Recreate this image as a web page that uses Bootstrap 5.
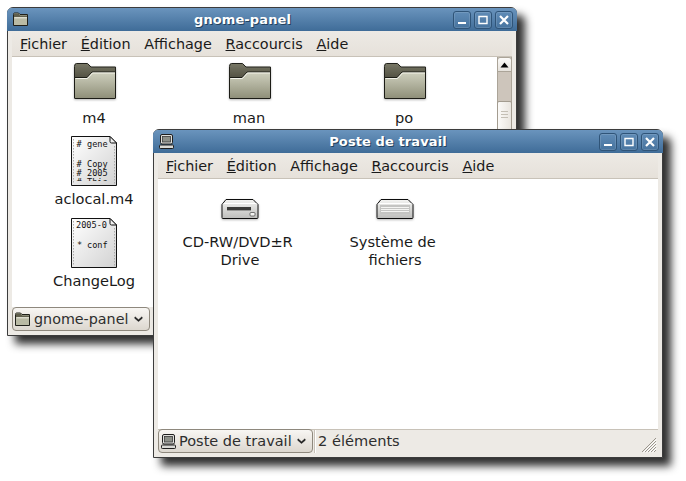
<!DOCTYPE html>
<html lang="fr">
<head>
<meta charset="utf-8">
<title>Poste de travail</title>
<link href="https://cdn.jsdelivr.net/npm/bootstrap@5.3.0/dist/css/bootstrap.min.css" rel="stylesheet">
<style>
html,body{margin:0;background:#fff;width:686px;height:481px;overflow:hidden}
body{font-family:"DejaVu Sans",sans-serif;font-size:14.6px;line-height:18px;color:#1a1a1a}
.gwin{width:510px;height:329px;background:#edeae5;border:1px solid #3c3c3c;border-radius:6px 6px 0 0;box-shadow:8px 8px 9px rgba(0,0,0,.82)}
.gwin-a{left:7px;top:7px}
.gwin-b{left:153px;top:129px}
.gtitle{height:23px;flex:none;margin:0 -1px;padding:0 4px 0 6px;background:linear-gradient(#6a94bd,#3f6c98);border-radius:5px 5px 0 0;color:#fff;font-weight:700;font-size:13px;text-shadow:1px 1px 0 #23425f}
.gtitle-icon{margin-right:6px;flex:none}
.gtitle-text{flex:1;text-align:center;letter-spacing:.1px}
.gbtn{width:18px;height:18px;margin-left:3px;border:1px solid #2f5478;border-radius:3px;background:linear-gradient(#5f8bb6,#47749f);box-shadow:inset 0 0 0 1px rgba(255,255,255,.12)}
.gmenu{height:26px;flex:none;margin:0 4px;padding:1px 0 0 8px;gap:13.7px;font-size:14.4px;background:linear-gradient(#edeae5,#e6e1da);border-bottom:1px solid #c8c2b8}
.gbody{flex:1;min-height:0;margin:0 4px;background:#fff;overflow:hidden}
.gicons{flex:1;padding-left:4.5px;display:grid;grid-template-columns:repeat(3,155px);grid-template-rows:76px 82px 83px;align-content:start}
.gicons-b{grid-template-rows:auto}
.gcell{display:flex;flex-direction:column;align-items:center;text-align:center}
.gcell svg{display:block;flex:none}
.glabel{width:130px}
.gscroll{width:15px;flex:none;background:#cdc5bb;border-left:1px solid #aba498;border-right:1px solid #aba498}
.gstep{height:15px;margin:0 -1px;border:1px solid #aba498;border-radius:3px 3px 0 0;background:linear-gradient(#fbfaf8,#e6e2dc)}
.gthumb{margin:29px -1px 0;height:70px;border:1px solid #a39c90;border-radius:2px;background:linear-gradient(90deg,#fbfaf8,#e9e5df)}
.gstatus{height:28px;flex:none;margin:0 4px;color:#2e2e2e}
.gstatus-b{border-top:1px solid #c8c2b8}
.gcombo{height:24px;border:1px solid #8e887d;border-radius:4px;background:linear-gradient(#f8f6f3,#dcd7cf);padding:0 6px 0 2px;gap:3px;white-space:nowrap;font-size:14.3px}
.gcombo-a{width:138px}
.gcombo-b{width:155px;margin-top:-1px;font-size:14.5px}
.gsep{width:2px;height:23px;border-left:1px solid #c8c2b8;border-right:1px solid #fff;margin:0 2px 0 1px}
.gcount{margin-top:2px}
.ggrip{width:17px;height:17px;margin-right:1px;align-self:flex-end;margin-bottom:4px}
</style>
</head>
<body>
<svg width="0" height="0" class="position-absolute">
<defs>
<linearGradient id="fb" x1="0" y1="0" x2="0" y2="1"><stop offset="0" stop-color="#787766"/><stop offset="1" stop-color="#4f4e3f"/></linearGradient>
<linearGradient id="ff" x1="0" y1="0" x2="0" y2="1"><stop offset="0" stop-color="#d0d1bf"/><stop offset="1" stop-color="#8e8e78"/></linearGradient>
<linearGradient id="dc" x1="0" y1="0" x2="1" y2="1"><stop offset="0" stop-color="#fff"/><stop offset="1" stop-color="#d2d2d2"/></linearGradient>
<linearGradient id="dv" x1="0" y1="0" x2="0" y2="1"><stop offset="0" stop-color="#f4f4f2"/><stop offset="1" stop-color="#bdbdbb"/></linearGradient>
<filter id="sf" x="-20%" y="-20%" width="140%" height="140%"><feDropShadow dx="0" dy="1" stdDeviation="1" flood-color="#000" flood-opacity=".28"/></filter>
<clipPath id="dclip"><rect x="3" y="2" width="41" height="43"/></clipPath>
<symbol id="folder" viewBox="0 0 48 52">
<g filter="url(#sf)">
<path d="M4.500 9.500q0-3 2-3h11l3.500 3.500h24.500v12h-41z" fill="url(#fb)" stroke="#22221c"/>
<path d="M4.500 20.500h12.500l5-5.500h23.500v26q0 .5-.5.5h-40q-.5 0-.5-.5z" fill="url(#ff)" stroke="#1d1d18"/>
<path d="M5.500 21.500h12l5-5.500h22.500" fill="none" stroke="#f3f3ea"/>
</g>
</symbol>
<symbol id="drive" viewBox="0 0 48 54">
<g filter="url(#sf)">
<path d="M6.500 39.500q-.5 0-.5-1v-13l4-5h27l5 5v13q0 1-1 1z" fill="url(#dv)" stroke="#111"/>
<path d="M7.500 24.500h33" stroke="#fff" fill="none"/>
</g>
</symbol>
<symbol id="smallfolder" viewBox="0 0 16 15">
<path d="M.5 2.500q0-1.500 1-1.500h4l1.500 1.500h7.500v11h-14z" fill="#b9baa4" stroke="#20201a"/>
<path d="M1 2h5l1 1.500h7v1.500h-13z" fill="#5f5e4c"/>
<path d="M1.500 5.800h12.500" stroke="#ecece0"/>
</symbol>
<symbol id="smallpc" viewBox="0 0 15 15">
<rect x="1.500" y=".5" width="12" height="9.500" rx="1.500" fill="#e0e0dc" stroke="#1e1e1e"/>
<rect x="3.500" y="2.500" width="8" height="5.500" fill="#8d9089" stroke="#3a3a3a" stroke-width=".8"/>
<rect x=".5" y="11" width="14" height="3.500" rx=".8" fill="#dadad6" stroke="#1e1e1e"/>
</symbol>
<symbol id="chev" viewBox="0 0 10 7">
<path d="M1 1l4 3.500L9 1l.5 1.500L5 6.500 .5 2.500z" fill="#1e1e1e" stroke="#1e1e1e" stroke-width=".6"/>
</symbol>
</defs>
</svg>

<section class="gwin gwin-a position-absolute d-flex flex-column">
<header class="gtitle d-flex align-items-center">
<svg width="16" height="15" class="gtitle-icon"><use href="#smallfolder"/></svg>
<div class="gtitle-text">gnome-panel</div>
<div class="gbtn d-flex align-items-center justify-content-center"><svg width="10" height="10"><rect x="1" y="7" width="8" height="2" fill="#fff"/></svg></div>
<div class="gbtn d-flex align-items-center justify-content-center"><svg width="10" height="10"><path d="M1 1.500h8v7h-8z" fill="none" stroke="#fff" stroke-width="1.400"/></svg></div>
<div class="gbtn d-flex align-items-center justify-content-center"><svg width="10" height="10"><path d="M1 1l8 8M9 1l-8 8" stroke="#fff" stroke-width="2.200"/></svg></div>
</header>
<nav class="gmenu d-flex align-items-center">
<span><u>F</u>ichier</span><span><u>É</u>dition</span><span>Afficha<u>g</u>e</span><span><u>R</u>accourcis</span><span><u>A</u>ide</span>
</nav>
<main class="gbody d-flex">
<div class="gicons">
<div class="gcell"><svg width="48" height="52"><use href="#folder"/></svg><div class="glabel">m4</div></div>
<div class="gcell"><svg width="48" height="52"><use href="#folder"/></svg><div class="glabel">man</div></div>
<div class="gcell"><svg width="48" height="52"><use href="#folder"/></svg><div class="glabel">po</div></div>
<div class="gcell">
<svg width="48" height="57" viewBox="0 0 48 57">
<path d="M1.500 3.500h38.500l6.500 6.500v42.500h-45z" fill="url(#dc)" stroke="#111"/>
<path d="M3.500 6v44.500M44.500 13v37.500" stroke="#aaa" stroke-dasharray="1.500 1.500" fill="none"/>
<g font-family="'DejaVu Sans Mono',monospace" font-size="8.600" fill="#111" clip-path="url(#dclip)" transform="translate(0 3)">
<text x="6.500" y="10.500">#</text><text x="17" y="10.500">gene</text>
<text x="6.500" y="31">#</text><text x="17" y="31">Copy</text>
<text x="6.500" y="40">#</text><text x="17" y="40">2005</text>
<text x="6.500" y="49">#</text><text x="17" y="49">This</text>
</g>
<path d="M40 3.500v5q0 1.500 1.500 1.500h5z" fill="#eee" stroke="#111"/>
</svg>
<div class="glabel">aclocal.m4</div></div>
<div class="gcell"></div><div class="gcell"></div>
<div class="gcell">
<svg width="48" height="57" viewBox="0 0 48 57">
<path d="M1.500 3.500h38.500l6.500 6.500v42.500h-45z" fill="url(#dc)" stroke="#111"/>
<path d="M3.500 6v44.500M44.500 13v37.500" stroke="#aaa" stroke-dasharray="1.500 1.500" fill="none"/>
<g font-family="'DejaVu Sans Mono',monospace" font-size="8.600" fill="#111">
<text x="6" y="12.500" textLength="31">2005-0</text>
<text x="7" y="33">*</text><text x="17" y="33">conf</text>
</g>
<path d="M40 3.500v5q0 1.500 1.500 1.500h5z" fill="#eee" stroke="#111"/>
</svg>
<div class="glabel">ChangeLog</div></div>
</div>
<aside class="gscroll">
<div class="gstep d-flex align-items-center justify-content-center"><svg width="9" height="6"><path d="M.5 5.500L4.500.5l4 5z" fill="#000"/></svg></div>
<div class="gthumb d-flex flex-column align-items-center"><svg width="9" height="10" class="mt-2"><path d="M1 1.500h7M1 4.500h7M1 7.500h7" stroke="#c4bfb5"/></svg></div>
</aside>
</main>
<footer class="gstatus d-flex align-items-start">
<div class="gcombo gcombo-a d-flex align-items-center">
<svg width="16" height="15"><use href="#smallfolder"/></svg><span class="flex-grow-1">gnome-panel</span><svg width="9" height="6"><use href="#chev"/></svg>
</div>
</footer>
</section>

<section class="gwin gwin-b position-absolute d-flex flex-column">
<header class="gtitle d-flex align-items-center">
<svg width="15" height="15" class="gtitle-icon"><use href="#smallpc"/></svg>
<div class="gtitle-text">Poste de travail</div>
<div class="gbtn d-flex align-items-center justify-content-center"><svg width="10" height="10"><rect x="1" y="7" width="8" height="2" fill="#fff"/></svg></div>
<div class="gbtn d-flex align-items-center justify-content-center"><svg width="10" height="10"><path d="M1 1.500h8v7h-8z" fill="none" stroke="#fff" stroke-width="1.400"/></svg></div>
<div class="gbtn d-flex align-items-center justify-content-center"><svg width="10" height="10"><path d="M1 1l8 8M9 1l-8 8" stroke="#fff" stroke-width="2.200"/></svg></div>
</header>
<nav class="gmenu d-flex align-items-center">
<span><u>F</u>ichier</span><span><u>É</u>dition</span><span>Afficha<u>g</u>e</span><span><u>R</u>accourcis</span><span><u>A</u>ide</span>
</nav>
<main class="gbody d-flex">
<div class="gicons gicons-b">
<div class="gcell">
<svg width="48" height="54"><use href="#drive"/><rect x="11" y="28" width="24" height="4" fill="#3a3a38"/><rect x="11" y="31" width="24" height="1" fill="#9a9a98"/><rect x="34" y="33.500" width="5" height="3.500" rx="1" fill="#f4f4f2" stroke="#444" stroke-width=".7"/></svg>
<div class="glabel">CD-RW/DVD±R&nbsp;<br>Drive</div></div>
<div class="gcell">
<svg width="48" height="54"><use href="#drive"/><rect x="9" y="26" width="30" height="9" fill="#c4c4c2"/><path d="M10 28.500h28M10 30.500h28M10 32.500h28" stroke="#f4f4f2"/></svg>
<div class="glabel">Système de&nbsp;<br>fichiers</div></div>
</div>
</main>
<footer class="gstatus gstatus-b d-flex align-items-start">
<div class="gcombo gcombo-b d-flex align-items-center">
<svg width="15" height="15"><use href="#smallpc"/></svg><span class="flex-grow-1">Poste de travail</span><svg width="9" height="6"><use href="#chev"/></svg>
</div>
<div class="gsep"></div>
<span class="flex-grow-1 gcount">2 éléments</span>
<svg class="ggrip" width="17" height="17"><path d="M16 2L2 16M16 5L5 16M16 8L8 16M16 11L11 16M16 14L14 16" stroke="#9a958c" fill="none"/><path d="M16.500 3.500L3.500 16.500M16.500 6.500L6.500 16.500M16.500 9.500L9.500 16.500M16.500 12.500L12.500 16.500" stroke="#fff" fill="none"/></svg>
</footer>
</section>
</body>
</html>
